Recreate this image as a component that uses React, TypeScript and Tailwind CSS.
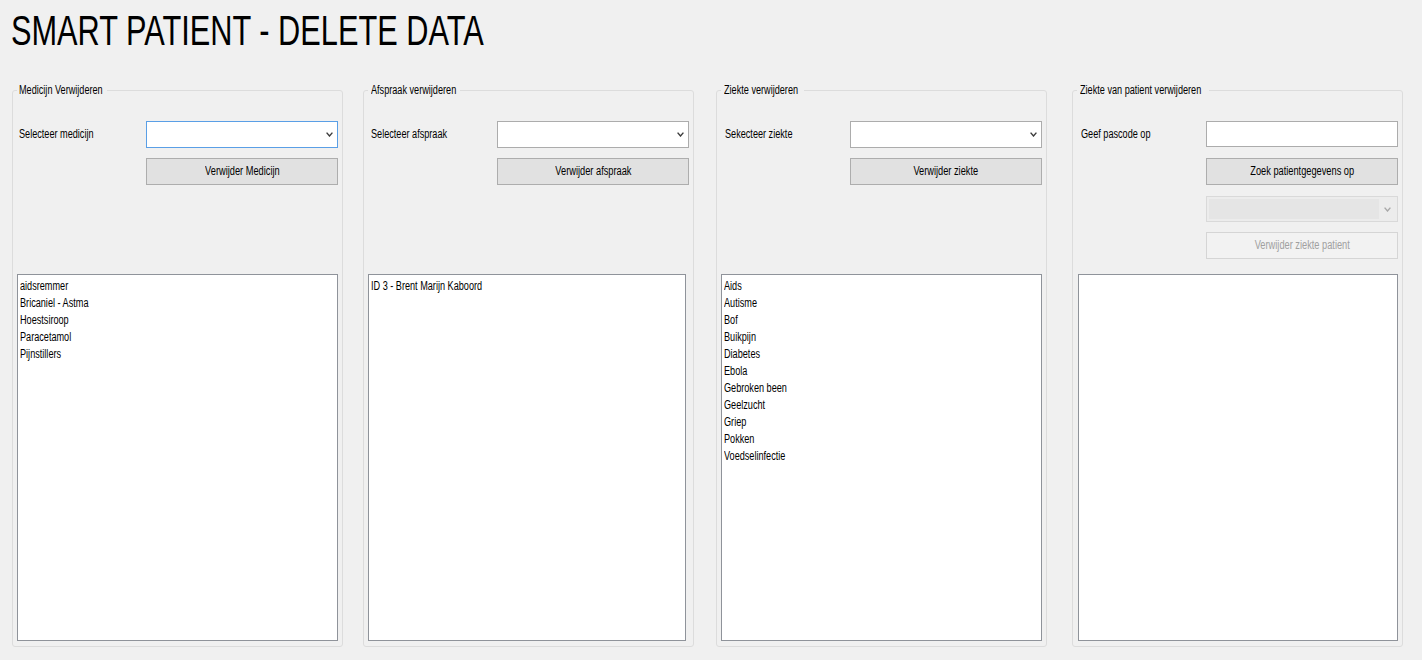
import React from "react";

const T = ({ children, className = "" }: { children: React.ReactNode; className?: string }) => (
  <span className={"inline-block origin-left scale-x-[0.73] whitespace-nowrap " + className}>{children}</span>
);

const Chevron = ({ color = "#3c3c3c" }: { color?: string }) => (
  <svg width="7" height="5" viewBox="0 0 7 5">
    <polyline points="0.6,0.6 3.5,4 6.4,0.6" fill="none" stroke={color} strokeWidth="1.4" />
  </svg>
);

const Combo = ({ focused = false }: { focused?: boolean }) => (
  <div
    className={
      focused
        ? "h-[27px] w-[192px] border border-[#5a9fe6] bg-white flex items-center justify-end pr-[4px]"
        : "h-[27px] w-[192px] border border-[#acacac] bg-white flex items-center justify-end pr-[4px]"
    }
  >
    <Chevron />
  </div>
);

const Btn = ({ children }: { children: React.ReactNode }) => (
  <button
    type="button"
    className="mt-[10px] ml-auto h-[27px] w-[192px] border border-[#adadad] bg-[#e1e1e1] flex items-center justify-center text-black"
  >
    <span className="inline-block scale-x-[0.74] whitespace-nowrap">{children}</span>
  </button>
);

type GroupProps = {
  title: string;
  legendClass: string;
  labelPad: string;
  label: string;
  focused?: boolean;
  button: string;
  items: string[];
  listClass?: string;
  className: string;
};

const Group = ({ title, legendClass, labelPad, label, focused, button, items, listClass = "", className }: GroupProps) => (
  <fieldset className={"w-[331px] border border-[#dcdcdc] rounded-[3px] px-[4px] pb-[5px] " + className}>
    <legend className={"leading-[16px] " + legendClass}>
      <T>{title}</T>
    </legend>
    <div className="h-[176px] flex flex-col">
      <div className="mt-[23px] flex items-center justify-between h-[27px]">
        <div className={labelPad}>
          <T>{label}</T>
        </div>
        <Combo focused={focused} />
      </div>
      <Btn>{button}</Btn>
    </div>
    <div className={"h-[367px] border border-[#8f939a] bg-white pl-[2px] pt-[3px] " + listClass}>
      {items.map((it) => (
        <div key={it} className="leading-[17px]">
          <T>{it}</T>
        </div>
      ))}
    </div>
  </fieldset>
);

export default function App() {
  return (
    <div className="w-[1422px] h-[660px] overflow-hidden bg-[#f0f0f0] text-black text-[12.5px] font-['Liberation_Sans',Arial,sans-serif]">
      <div className="h-[82px] pt-[9px] pl-[11px]">
        <h1 className="inline-block origin-left scale-x-[0.715] text-[43px] leading-[43px] whitespace-nowrap font-normal">
          SMART PATIENT - DELETE DATA
        </h1>
      </div>
      <div className="flex items-start pl-[12px]">
        <Group
          className=""
          title="Medicijn Verwijderen"
          legendClass="w-[90px] pl-[2px]"
          labelPad="pl-[2px]"
          label="Selecteer medicijn"
          focused
          button="Verwijder Medicijn"
          items={["aidsremmer", "Bricaniel - Astma", "Hoestsiroop", "Paracetamol", "Pijnstillers"]}
        />
        <Group
          className="ml-[20px]"
          title="Afspraak verwijderen"
          legendClass="w-[92px] pl-[3px]"
          labelPad="pl-[3px]"
          label="Selecteer afspraak"
          button="Verwijder afspraak"
          items={["ID 3 - Brent Marijn Kaboord"]}
          listClass="mr-[3px]"
        />
        <Group
          className="ml-[22px]"
          title="Ziekte verwijderen"
          legendClass="w-[83px] pl-[3px]"
          labelPad="pl-[4px]"
          label="Sekecteer ziekte"
          button="Verwijder ziekte"
          items={[
            "Aids",
            "Autisme",
            "Bof",
            "Buikpijn",
            "Diabetes",
            "Ebola",
            "Gebroken been",
            "Geelzucht",
            "Griep",
            "Pokken",
            "Voedselinfectie",
          ]}
        />
        <fieldset className="ml-[25px] w-[331px] border border-[#dcdcdc] rounded-[3px] px-[4px] pb-[5px]">
          <legend className="leading-[16px] w-[132px] pl-[3px]">
            <T>Ziekte van patient verwijderen</T>
          </legend>
          <div className="h-[176px] flex flex-col">
            <div className="mt-[23px] flex items-center justify-between h-[26px]">
              <div className="pl-[4px]">
                <T>Geef pascode op</T>
              </div>
              <div className="h-[26px] w-[192px] border border-[#acacac] bg-white" />
            </div>
            <button
              type="button"
              className="mt-[11px] ml-auto h-[27px] w-[192px] border border-[#adadad] bg-[#e1e1e1] flex items-center justify-center text-black"
            >
              <span className="inline-block scale-x-[0.74] whitespace-nowrap">Zoek patientgegevens op</span>
            </button>
            <div className="mt-[11px] ml-auto h-[26px] w-[192px] border border-[#d9d9d9] bg-[#ececec] flex items-center p-[2px]">
              <div className="h-full flex-1 bg-[#e5e5e5]" />
              <div className="w-[16px] flex justify-center">
                <Chevron color="#a8a8a8" />
              </div>
            </div>
            <button
              type="button"
              className="mt-[10px] ml-auto h-[27px] w-[192px] border border-[#d5d5d5] bg-[#f2f2f2] flex items-center justify-center text-[#a0a0a0]"
            >
              <span className="inline-block scale-x-[0.74] whitespace-nowrap">Verwijder ziekte patient</span>
            </button>
          </div>
          <div className="h-[367px] border border-[#8f939a] bg-white ml-[1px]" />
        </fieldset>
      </div>
    </div>
  );
}
